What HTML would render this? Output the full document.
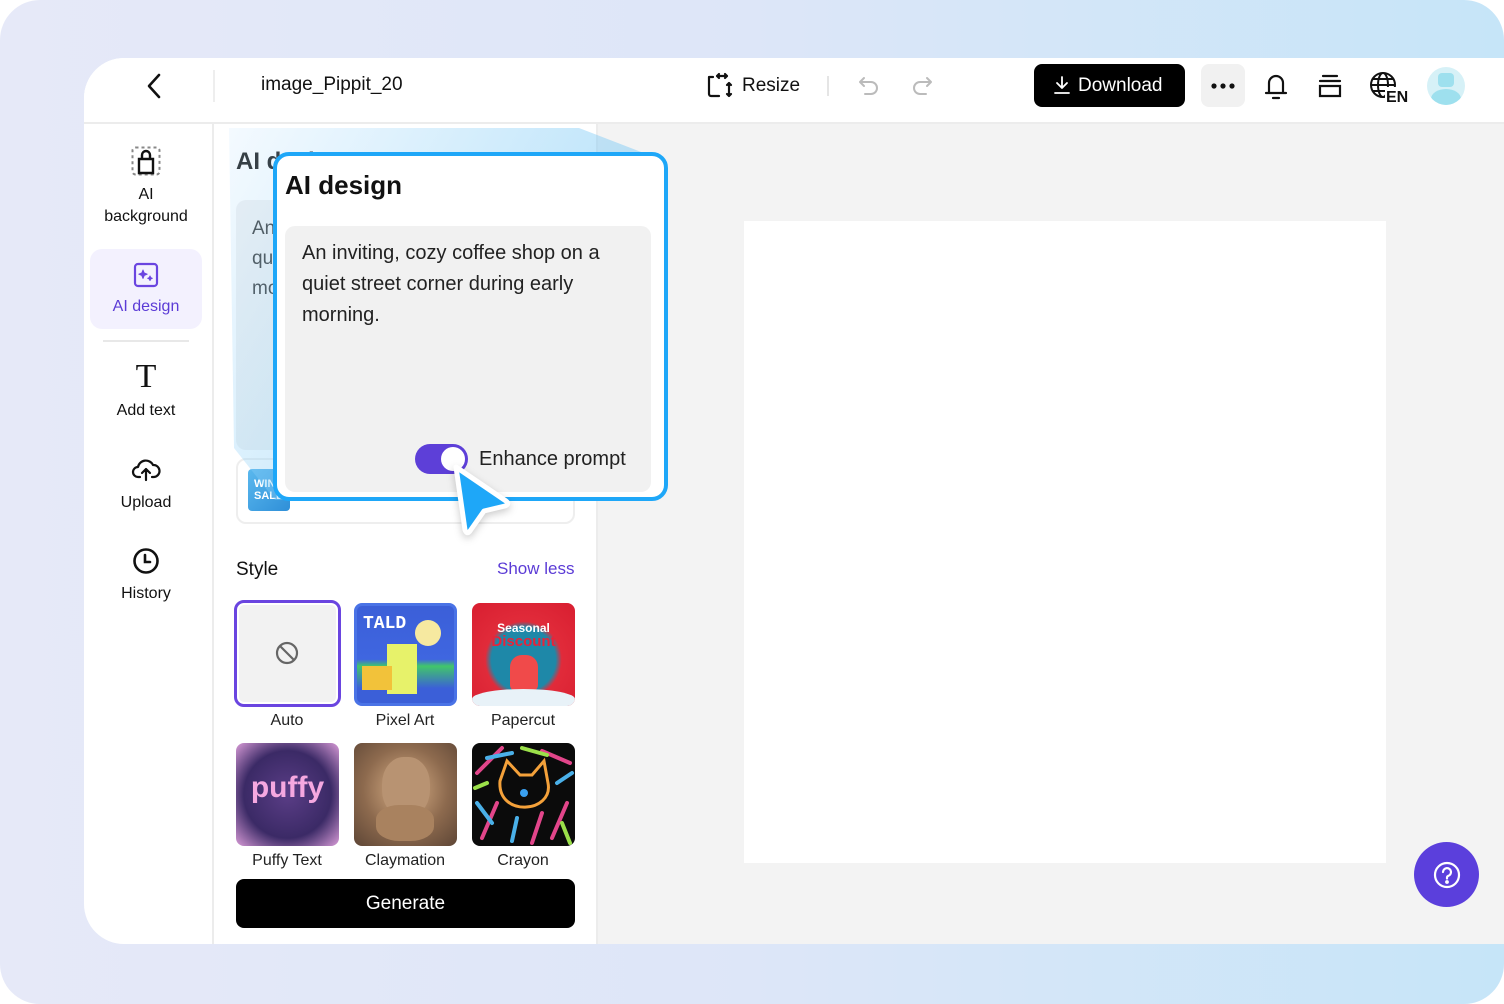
<!DOCTYPE html>
<html><head><meta charset="utf-8"><style>
*{box-sizing:border-box;margin:0;padding:0}
html,body{width:1504px;height:1004px;background:#fff;overflow:hidden;font-family:"Liberation Sans",Arial,sans-serif;color:#111}
.bg{position:absolute;left:0;top:0;width:1504px;height:1004px;border-radius:40px;background:linear-gradient(90deg,#e6e9f8 0%,#dde6f8 50%,#c6e5f8 100%)}
.win{position:absolute;left:84px;top:58px;width:1420px;height:886px;border-radius:40px 0 0 40px;background:#fff;overflow:hidden}
.hdr{position:absolute;left:0;top:0;width:1420px;height:66px;border-bottom:2px solid #ececec;background:#fff}
.abs{position:absolute}
.side{position:absolute;left:0;top:66px;width:130px;height:820px;border-right:2px solid #ececec}
.si{position:absolute;left:0;width:124px;text-align:center;font-size:16px;color:#111;line-height:22px}
.panel{position:absolute;left:130px;top:66px;width:384px;height:820px;border-right:2px solid #ececec;background:#fff}
.canvas{position:absolute;left:514px;top:66px;width:906px;height:820px;background:#f3f3f3}
.thumb{position:absolute;width:103px;height:103px;border-radius:8px;overflow:hidden}
.lbl{position:absolute;width:118px;text-align:center;font-size:16px;color:#222}
</style></head><body>
<div class="bg"></div>
<div class="win">
 <div class="hdr">
  <svg class="abs" style="left:60px;top:14px" width="20" height="28" viewBox="0 0 20 28"><path d="M15 3 L5 14 L15 25" fill="none" stroke="#111" stroke-width="2.6" stroke-linecap="round" stroke-linejoin="round"/></svg>
  <div class="abs" style="left:129px;top:12px;width:2px;height:32px;background:#eee"></div>
  <div class="abs" style="left:177px;top:16px;font-size:19px;width:141px;overflow:hidden;white-space:nowrap">image_Pippit_2025</div>
  <svg class="abs" style="left:622px;top:14px" width="28" height="28" viewBox="0 0 28 28" fill="none" stroke="#111" stroke-width="2.2" stroke-linecap="round"><path d="M3 9 V22 a2 2 0 0 0 2 2 H13 M3 9 V5 M3 5 H7 M11 4 H21 M11 4 l2 -2 M11 4 l2 2 M21 4 l-2 -2 M21 4 l-2 2 M23 11 V24 M23 11 l-2 2 M23 11 l2 2 M23 24 l-2 -2 M23 24 l2 -2"/></svg>
  <div class="abs" style="left:658px;top:17px;font-size:19px">Resize</div>
  <div class="abs" style="left:743px;top:18px;width:2px;height:20px;background:#e5e5e5"></div>
  <svg class="abs" style="left:772px;top:15px" width="26" height="26" viewBox="0 0 26 26" fill="none" stroke="#bbb" stroke-width="2" stroke-linecap="round" stroke-linejoin="round"><path d="M8 5 L4 9 L8 13 M4 9 H15 a6 6 0 0 1 0 12 H9"/></svg>
  <svg class="abs" style="left:825px;top:15px" width="26" height="26" viewBox="0 0 26 26" fill="none" stroke="#bbb" stroke-width="2" stroke-linecap="round" stroke-linejoin="round"><path d="M18 5 L22 9 L18 13 M22 9 H11 a6 6 0 0 0 0 12 H17"/></svg>
  <div class="abs" style="left:950px;top:6px;width:151px;height:43px;background:#000;border-radius:8px;color:#fff;font-size:19px;line-height:43px;padding-left:44px">Download</div>
  <svg class="abs" style="left:968px;top:17px" width="20" height="20" viewBox="0 0 20 20" fill="none" stroke="#fff" stroke-width="1.8" stroke-linecap="round" stroke-linejoin="round"><path d="M10 2 V13 M5 8 L10 13 L15 8 M3 18 H17"/></svg>
  <div class="abs" style="left:1117px;top:6px;width:44px;height:43px;background:#f1f1f1;border-radius:8px"></div>
  <svg class="abs" style="left:1126px;top:24px" width="26" height="8" viewBox="0 0 26 8" fill="#111"><circle cx="4" cy="4" r="2.6"/><circle cx="13" cy="4" r="2.6"/><circle cx="22" cy="4" r="2.6"/></svg>
  <svg class="abs" style="left:1178px;top:13px" width="28" height="30" viewBox="0 0 28 30" fill="none" stroke="#111" stroke-width="2.2" stroke-linecap="round"><path d="M7 22 V12 a7 7 0 0 1 14 0 V22 M4 22 H24 M11 27 H17"/></svg>
  <svg class="abs" style="left:1232px;top:14px" width="28" height="28" viewBox="0 0 28 28" fill="none" stroke="#111" stroke-width="2.2" stroke-linecap="round"><path d="M7 4 H21 M4 9 H24 M4 14 H24 V24 H4 Z"/></svg>
  <svg class="abs" style="left:1284px;top:12px" width="40" height="34" viewBox="0 0 40 34" fill="none" stroke="#111" stroke-width="2"><circle cx="15" cy="15" r="12"/><ellipse cx="15" cy="15" rx="5" ry="12"/><path d="M3 15 H27 M5 9 H25 M5 21 H20"/><rect x="17" y="17" width="22" height="17" fill="#fff" stroke="none"/><text x="18" y="32" font-family="Liberation Sans" font-size="16" font-weight="bold" fill="#111" stroke="none">EN</text></svg>
  <div class="abs" style="left:1343px;top:9px;width:38px;height:38px;border-radius:50%;background:#d6f1f7;overflow:hidden"><div class="abs" style="left:11px;top:6px;width:16px;height:14px;border-radius:4px;background:#9ee0ee"></div><div class="abs" style="left:4px;top:22px;width:30px;height:20px;border-radius:50%;background:#9ee0ee"></div></div>
 </div>

 <div class="side">
  <svg class="abs" style="left:47px;top:22px" width="30" height="30" viewBox="0 0 30 30" fill="none"><rect x="1.5" y="1.5" width="27" height="27" rx="3" stroke="#888" stroke-width="2" stroke-dasharray="3 3"/><path d="M8 27 V13 H22 V27 Z M11 13 V9 a4 4 0 0 1 8 0 V13" stroke="#111" stroke-width="2.4"/></svg>
  <div class="si" style="top:60px">AI<br>background</div>
  <div class="abs" style="left:6px;top:125px;width:112px;height:80px;border-radius:12px;background:#f3f1fe"></div>
  <svg class="abs" style="left:48px;top:137px" width="28" height="28" viewBox="0 0 28 28" fill="none" stroke="#6a45e0" stroke-width="2.2" stroke-linejoin="round"><rect x="3" y="3" width="22" height="22" rx="3"/><path d="M11 9 l1.2 3 3 1.2 -3 1.2 -1.2 3 -1.2 -3 -3 -1.2 3 -1.2Z M18 15 l.7 1.6 1.6.7 -1.6.7 -.7 1.6 -.7 -1.6 -1.6 -.7 1.6 -.7Z" fill="#6a45e0" stroke-width="1"/></svg>
  <div class="si" style="top:172px;color:#5b3bd6">AI design</div>
  <div class="abs" style="left:19px;top:216px;width:86px;height:2px;background:#e8e8e8"></div>
  <div class="abs" style="left:47px;top:236px;width:30px;font-family:'Liberation Serif',serif;font-size:34px;line-height:34px;text-align:center">T</div>
  <div class="si" style="top:276px">Add text</div>
  <svg class="abs" style="left:47px;top:330px" width="30" height="30" viewBox="0 0 30 30" fill="none" stroke="#111" stroke-width="2.2" stroke-linecap="round" stroke-linejoin="round"><path d="M9 23 H7 a5 5 0 0 1 0 -10 a8 8 0 0 1 15 -2 a6 6 0 0 1 1 12 H21 M15 26 V15 M11 19 L15 15 L19 19"/></svg>
  <div class="si" style="top:368px">Upload</div>
  <svg class="abs" style="left:48px;top:423px" width="28" height="28" viewBox="0 0 28 28" fill="none" stroke="#111" stroke-width="2.6" stroke-linecap="round"><circle cx="14" cy="14" r="11.5"/><path d="M13 8 V15 H18"/></svg>
  <div class="si" style="top:459px">History</div>
 </div>

 <div class="panel">
  <div class="abs" style="left:22px;top:24px;font-size:24px;font-weight:bold">AI design</div>
  <div class="abs" style="left:22px;top:76px;width:339px;height:250px;border-radius:10px;background:#f1f1f1;padding:14px 16px;font-size:19px;line-height:30px;color:#333">An inviting, cozy coffee shop on a quiet street corner during early morning.</div>
  <div class="abs" style="left:22px;top:334px;width:339px;height:66px;border:2px solid #eee;border-radius:10px"></div>
  <div class="abs" style="left:34px;top:345px;width:42px;height:42px;border-radius:4px;background:linear-gradient(135deg,#5ab8ee,#2f8fd8);color:#fff;font-size:11px;font-weight:bold;line-height:12px;padding:9px 0 0 6px">WIN<br>SALE</div>
  <div class="abs" style="left:22px;top:435px;font-size:19px">Style</div>
  <div class="abs" style="left:283px;top:435px;font-size:17px;color:#5b3bd6">Show less</div>
  <div class="thumb" style="left:20px;top:476px;width:107px;height:107px;border:3px solid #6a45e0;border-radius:10px;background:#f2f2f2;box-shadow:inset 0 0 0 2px #fff"></div>
  <svg class="abs" style="left:61px;top:517px" width="24" height="24" viewBox="0 0 24 24" fill="none" stroke="#666" stroke-width="2.2"><circle cx="12" cy="12" r="10"/><path d="M5 5 L19 19"/></svg>
  <div class="thumb" style="left:140px;top:479px;background:linear-gradient(180deg,#3b5fd8 0%,#3f66e0 55%,#41c66a 62%,#3b5fd8 85%);border:3px solid #4a73e6"><div class="abs" style="left:6px;top:8px;color:#fff;font-size:18px;font-weight:bold;font-family:'Liberation Mono',monospace">TALD</div><div class="abs" style="left:58px;top:14px;width:26px;height:26px;border-radius:50%;background:#f6e9a0"></div><div class="abs" style="left:30px;top:38px;width:30px;height:50px;background:#e7f26a"></div><div class="abs" style="left:5px;top:60px;width:30px;height:24px;background:#f2c23a"></div></div>
  <div class="thumb" style="left:258px;top:479px;background:radial-gradient(circle at 50% 55%,#1e88a8 0 42%,#e12b3a 50%,#d81e30 100%)"><div class="abs" style="left:0;top:18px;width:103px;text-align:center;color:#fff;font-size:12px;font-weight:bold">Seasonal</div><div class="abs" style="left:0;top:30px;width:103px;text-align:center;color:#e6243a;font-size:15px;font-weight:bold">Discount</div><div class="abs" style="left:38px;top:52px;width:28px;height:36px;border-radius:12px 12px 6px 6px;background:#f04a4a"></div><div class="abs" style="left:0;top:86px;width:103px;height:20px;background:#e8f2f8;border-radius:50% 50% 0 0"></div></div>
  <div class="lbl" style="left:14px;top:588px">Auto</div>
  <div class="lbl" style="left:132px;top:588px">Pixel Art</div>
  <div class="lbl" style="left:250px;top:588px">Papercut</div>
  <div class="thumb" style="left:22px;top:619px;background:radial-gradient(circle at 50% 50%,#5a3d86,#3b2a66 60%,#d79ad6 100%)"><div class="abs" style="left:0;top:28px;width:103px;text-align:center;font-size:30px;font-weight:bold;color:#f5a8e0">puffy</div></div>
  <div class="thumb" style="left:140px;top:619px;background:radial-gradient(circle at 50% 45%,#b08a68 0 30%,#8d6a4e 55%,#5e4636 100%)"><div class="abs" style="left:28px;top:14px;width:48px;height:60px;border-radius:45%;background:#b89372"></div><div class="abs" style="left:22px;top:62px;width:58px;height:36px;border-radius:40%;background:#a9825f"></div></div>
  <div class="thumb" style="left:258px;top:619px;background:#0b0b0b"><svg width="103" height="103" viewBox="0 0 103 103" fill="none" stroke-width="4" stroke-linecap="round"><path d="M5 30 L30 5 M70 8 L98 20 M10 95 L25 60 M80 95 L95 60 M60 100 L70 70" stroke="#e2458a"/><path d="M15 15 L40 10 M85 40 L100 30 M5 60 L20 80 M40 98 L45 75" stroke="#4ab0e8"/><path d="M50 5 L75 12 M90 80 L98 100 M3 45 L15 40" stroke="#9be04a"/><path d="M28 38 L35 18 L48 32 H60 L72 18 L76 40 C82 70 25 75 28 38Z" stroke="#f4a13a" stroke-width="3"/><circle cx="52" cy="50" r="4" fill="#3aa0f0" stroke="none"/></svg></div>
  <div class="lbl" style="left:14px;top:728px">Puffy Text</div>
  <div class="lbl" style="left:132px;top:728px">Claymation</div>
  <div class="lbl" style="left:250px;top:728px">Crayon</div>
  <div class="abs" style="left:22px;top:755px;width:339px;height:49px;background:#000;border-radius:8px;color:#fff;font-size:19px;text-align:center;line-height:49px">Generate</div>
 </div>

 <div class="canvas">
  <div class="abs" style="left:146px;top:97px;width:642px;height:642px;background:#fff"></div>
  <div class="abs" style="left:816px;top:718px;width:65px;height:65px;border-radius:50%;background:#5b3fdc"></div>
  <svg class="abs" style="left:834px;top:736px" width="30" height="30" viewBox="0 0 30 30" fill="none" stroke="#fff" stroke-width="2.2" stroke-linecap="round"><circle cx="15" cy="15" r="12"/><path d="M11 12 a4 4 0 1 1 5 4 c-1 .5 -1 1 -1 2.5"/><circle cx="15" cy="22" r=".8" fill="#fff"/></svg>
 </div>
</div>

<div class="abs" style="left:229px;top:128px;width:440px;height:380px;clip-path:polygon(0 0,350px 0,420px 27px,420px 372px,46px 372px,5px 320px);background:linear-gradient(120deg,rgba(200,230,255,.2) 0%,rgba(120,200,245,.45) 60%,rgba(110,195,240,.55) 100%)"></div>
<div class="abs" style="left:273px;top:152px;width:395px;height:349px;border:4px solid #1ea7f8;border-radius:16px;background:#fff"></div>
<div class="abs" style="left:285px;top:170px;font-size:26px;font-weight:bold">AI design</div>
<div class="abs" style="left:285px;top:226px;width:366px;height:266px;background:#f1f1f1;border-radius:10px;padding:12px 17px;font-size:20px;line-height:31px;color:#222">An inviting, cozy coffee shop on a quiet street corner during early morning.</div>
<div class="abs" style="left:415px;top:444px;width:53px;height:30px;border-radius:15px;background:#5d3fd8"></div>
<div class="abs" style="left:441px;top:447px;width:24px;height:24px;border-radius:50%;background:#fff"></div>
<div class="abs" style="left:479px;top:448px;font-size:20px;color:#222">Enhance prompt</div>
<svg class="abs" style="left:440px;top:455px;filter:drop-shadow(0 3px 4px rgba(0,0,0,.2))" width="80" height="85" viewBox="0 0 80 85"><path d="M16 12 L66 46 Q70 49 65 51 L44 56 L30 76 Q27 80 25 75 Z" fill="#1ea7f8" stroke="#fff" stroke-width="5" stroke-linejoin="round"/></svg>
</body></html>
